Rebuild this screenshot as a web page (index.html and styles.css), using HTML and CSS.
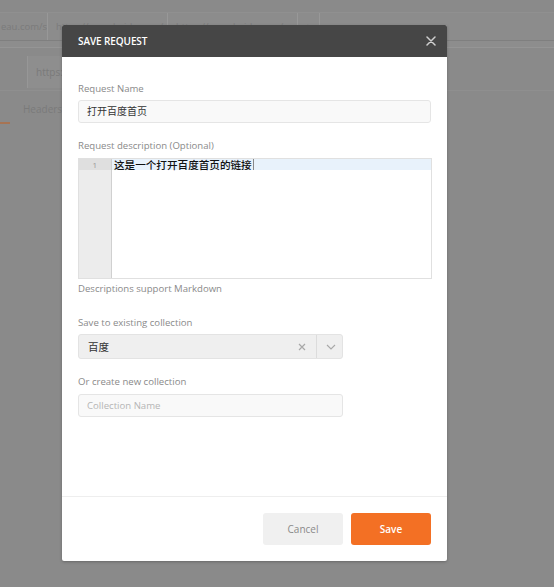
FILE: index.html
```html
<!DOCTYPE html>
<html>
<head>
<meta charset="utf-8">
<link rel="stylesheet" href="styles.css">
</head>
<body>
<div class="app">
  <div class="tabbar">
    <div class="tab t1">eau.com/s</div>
    <div class="tab t2">https://www.baidu.com/</div>
    <div class="tab t3">https://www.baidu.com/s</div>
    <div class="tab t4">+</div>
  </div>
  <div class="subbar"></div>
  <div class="urlrow">
    <div class="method"></div>
    <div class="urlbox">https://www.baidu.com</div>
  </div>
  <div class="reqtabs">
    <div class="reqtab active"></div>
    <div class="reqtab">Headers</div>
  </div>
</div>

<div class="modal">
  <div class="modal-head">
    <span class="modal-title">SAVE REQUEST</span>
    <svg class="close" width="10" height="10" viewBox="0 0 10 10"><path d="M1 1L9 9M9 1L1 9" stroke="#cfcfcf" stroke-width="1.5" stroke-linecap="round"/></svg>
  </div>
  <div class="modal-body">
    <div class="label">Request Name</div>
    <div class="input name-input">打开百度首页</div>

    <div class="label gap">Request description (Optional)</div>
    <div class="editor">
      <div class="gutter"><div class="lineno">1</div></div>
      <div class="code"><div class="line">这是一个打开百度首页的链接<span class="cursor"></span></div></div>
    </div>
    <div class="hint">Descriptions support Markdown</div>

    <div class="label gap2">Save to existing collection</div>
    <div class="select">
      <span class="select-val">百度</span>
      <svg class="clear" width="8" height="8" viewBox="0 0 8 8"><path d="M1 1L7 7M7 1L1 7" stroke="#a8a8a8" stroke-width="1.2"/></svg>
      <span class="sep"></span>
      <svg class="chev" width="10" height="6" viewBox="0 0 10 6"><path d="M1 1L5 5L9 1" fill="none" stroke="#a8a8a8" stroke-width="1.1"/></svg>
    </div>

    <div class="label gap">Or create new collection</div>
    <div class="input new-input">Collection Name</div>
  </div>
  <div class="modal-foot">
    <button class="btn cancel">Cancel</button>
    <button class="btn save">Save</button>
  </div>
</div>
</body>
</html>
```

FILE: styles.css
```css
html, body {
  margin: 0;
  padding: 0;
}
body {
  width: 554px;
  height: 587px;
  background: #8a8a8a;
  font-family: "Open Sans", "Noto Sans CJK SC", sans-serif;
  overflow: hidden;
  position: relative;
}
.app {
  display: flex;
  flex-direction: column;
}
.tabbar {
  margin-top: 12px;
  height: 27px;
  display: flex;
  border-top: 1px solid #909090;
  border-bottom: 1px solid #7f7f7f;
  background: #8c8c8c;
}
.tab {
  height: 27px;
  line-height: 27px;
  font-size: 9.5px;
  color: #7b7b7b;
  border-right: 1px solid #989898;
  overflow: hidden;
  white-space: nowrap;
  padding-left: 8px;
  box-sizing: border-box;
}
.t1 { width: 48px; padding-left: 1px; }
.t2 { width: 120px; }
.t3 { width: 130px; }
.t4 { width: 22px; padding-left: 7px; }
.subbar {
  height: 6px;
  border-bottom: 1px solid #959595;
  background: #8d8d8d;
}
.urlrow {
  height: 34px;
  display: flex;
  padding-top: 8px;
  border-bottom: 1px solid #8f8f8f;
}
.method {
  width: 27px;
}
.urlbox {
  width: 200px;
  height: 32px;
  line-height: 32px;
  border-left: 1px solid #979797;
  background: #8e8e8e;
  color: #7a7a7a;
  font-size: 10px;
  padding-left: 8px;
}
.reqtabs {
  display: flex;
  height: 36px;
  align-items: center;
}
.reqtab {
  font-size: 10px;
  color: #7a7a7a;
}
.reqtab.active {
  width: 10px;
  height: 2px;
  background: #a77454;
  align-self: flex-end;
  margin-bottom: 3px;
  margin-right: 13px;
}

.modal {
  position: absolute;
  left: 62px;
  top: 25px;
  width: 385px;
  height: 536px;
  background: #fff;
  display: flex;
  flex-direction: column;
  border-radius: 2px;
  box-shadow: 0 1px 3px rgba(0,0,0,0.25);
  overflow: hidden;
}
.modal-head {
  height: 32px;
  background: #464646;
  display: flex;
  align-items: center;
  justify-content: space-between;
  padding: 0 11px 0 16px;
  flex: none;
}
.modal-title {
  color: #fff;
  font-size: 10px;
  font-weight: 600;
  letter-spacing: -0.1px;
}
.modal-body {
  flex: 1;
  padding: 25px 16px 0 16px;
  display: flex;
  flex-direction: column;
  align-items: flex-start;
}
.label, .hint {
  font-size: 9.6px;
  line-height: 14px;
  color: #8a8a8a;
}
.label {
  margin-bottom: 4px;
}
.label.gap { margin-top: 16px; margin-bottom: 5px; }
.label.gap2 { margin-top: 20px; }
.hint { margin-top: 3px; }
.input {
  box-sizing: border-box;
  height: 23px;
  line-height: 21px;
  border: 1px solid #e5e5e5;
  border-radius: 3px;
  background: #f9f9f9;
  padding-left: 8px;
  font-size: 10px;
}
.name-input {
  width: 353px;
  color: #333;
}
.new-input {
  width: 265px;
  color: #b5b5b5;
  font-size: 9.6px;
}
.editor {
  box-sizing: border-box;
  width: 354px;
  height: 121px;
  border: 1px solid #e0e0e0;
  display: flex;
}
.gutter {
  width: 32px;
  background: #ececec;
  border-right: 1px solid #d0d0d0;
  flex: none;
}
.lineno {
  height: 11px;
  background: #dfdfdf;
  font-size: 8px;
  line-height: 11px;
  color: #999;
  text-align: right;
  padding-right: 14px;
}
.code {
  flex: 1;
}
.line {
  height: 11px;
  line-height: 11px;
  background: #e8f2fb;
  font-size: 10.6px;
  color: #111;
  padding-left: 2px;
  font-family: "Noto Sans CJK SC", sans-serif;
  font-weight: 500;
}
.cursor {
  display: inline-block;
  width: 1px;
  height: 11px;
  background: #888;
  vertical-align: top;
  margin-left: 1px;
}
.select {
  box-sizing: border-box;
  width: 265px;
  height: 25px;
  border: 1px solid #e3e3e3;
  border-radius: 3px;
  background: #efefef;
  display: flex;
  align-items: center;
}
.select-val {
  font-size: 10.5px;
  color: #333;
  padding-left: 9px;
  flex: 1;
}
.clear {
  margin-right: 10px;
}
.sep {
  width: 1px;
  height: 23px;
  background: #dcdcdc;
  margin-right: 9px;
}
.chev {
  margin-right: 6px;
}
.modal-foot {
  flex: none;
  height: 64px;
  border-top: 1px solid #eeeeee;
  display: flex;
  justify-content: flex-end;
  align-items: center;
  gap: 8px;
  padding-right: 16px;
}
.btn {
  width: 80px;
  height: 32px;
  border: none;
  border-radius: 3px;
  font-family: "Open Sans", sans-serif;
  font-size: 10px;
  cursor: pointer;
}
.cancel {
  background: #f0f0f0;
  color: #8a8a8a;
}
.save {
  background: #f37024;
  color: #fff;
  font-weight: 600;
}
```
